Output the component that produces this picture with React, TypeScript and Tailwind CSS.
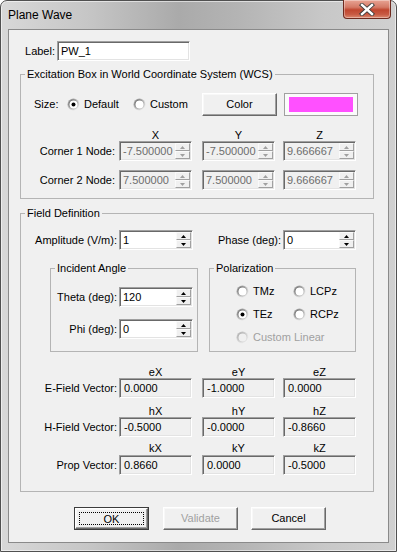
import type { ReactNode } from 'react';

const sunken =
  'border border-t-[#a0a0a0] border-l-[#a0a0a0] border-b-white border-r-white shadow-[inset_1px_1px_0_#696969,inset_-1px_-1px_0_#e3e3e3]';
const raised =
  'border border-t-white border-l-white border-b-[#696969] border-r-[#696969] shadow-[inset_-1px_-1px_0_#a0a0a0,inset_1px_1px_0_#f8f8f8] bg-[#f0f0f0]';

function Radio({ checked, disabled }: { checked?: boolean; disabled?: boolean }) {
  const outer = disabled ? 'url(#rad-o-d)' : 'url(#rad-o)';
  const inner = disabled ? 'url(#rad-i-d)' : 'url(#rad-i)';
  return (
    <svg width="13" height="13" viewBox="0 0 13 13" className="shrink-0">
      <defs>
        <linearGradient id="rad-o" x1="0" y1="0" x2="1" y2="1">
          <stop offset="0" stopColor="#8c8c8c" />
          <stop offset="1" stopColor="#ffffff" />
        </linearGradient>
        <linearGradient id="rad-i" x1="0" y1="0" x2="1" y2="1">
          <stop offset="0" stopColor="#505050" />
          <stop offset="1" stopColor="#e3e3e3" />
        </linearGradient>
        <linearGradient id="rad-o-d" x1="0" y1="0" x2="1" y2="1">
          <stop offset="0" stopColor="#b4b4b4" />
          <stop offset="1" stopColor="#ffffff" />
        </linearGradient>
        <linearGradient id="rad-i-d" x1="0" y1="0" x2="1" y2="1">
          <stop offset="0" stopColor="#a0a0a0" />
          <stop offset="1" stopColor="#ececec" />
        </linearGradient>
      </defs>
      <circle cx="6.5" cy="6.5" r="6" fill={outer} />
      <circle cx="6.5" cy="6.5" r="5" fill={inner} />
      <circle cx="6.5" cy="6.5" r="4" fill={disabled ? '#f0f0f0' : '#ffffff'} />
      {checked && <circle cx="6.5" cy="6.5" r="2" fill="#000" />}
    </svg>
  );
}

function SpinBtn({ up, disabled }: { up?: boolean; disabled?: boolean }) {
  return (
    <div className="flex flex-1 items-center justify-center border border-t-[#fafafa] border-l-[#fafafa] border-b-[#a0a0a0] border-r-[#a0a0a0] bg-[#f0f0f0]">
      <svg width="5" height="3" viewBox="0 0 5 3">
        <polygon
          points={up ? '2.5,0 5,3 0,3' : '0,0 5,0 2.5,3'}
          fill={disabled ? '#a0a0a0' : '#000'}
        />
      </svg>
    </div>
  );
}

function Spin({
  value,
  className,
  disabled,
}: {
  value: string;
  className: string;
  disabled?: boolean;
}) {
  return (
    <div
      className={`flex h-[20px] ${sunken} ${
        disabled ? 'bg-[#f0f0f0] text-[#6d6d6d]' : 'bg-white'
      } ${className}`}
    >
      <div className="flex-1 pl-[3px] leading-[18px]">{value}</div>
      <div className="flex w-[16px] flex-col py-[1px] pr-[1px]">
        <SpinBtn up disabled={disabled} />
        <SpinBtn disabled={disabled} />
      </div>
    </div>
  );
}

function Box({ value, className }: { value: string; className: string }) {
  return (
    <div className={`h-[20px] bg-[#f0f0f0] pl-[4px] leading-[18px] ${sunken} ${className}`}>
      {value}
    </div>
  );
}

function Group({
  title,
  className,
  children,
}: {
  title: string;
  className: string;
  children: ReactNode;
}) {
  return (
    <fieldset className={`border border-[#b4b4b4] ${className}`}>
      <legend className="ml-[4px] px-[2px] leading-[14px]">{title}</legend>
      {children}
    </fieldset>
  );
}

function Headers({ cols }: { cols: string[] }) {
  return (
    <div className="flex h-[12px] leading-[12px]">
      <div className="w-[98px]" />
      <div className="w-[73px] text-center">{cols[0]}</div>
      <div className="ml-[10px] w-[73px] text-center">{cols[1]}</div>
      <div className="ml-[8px] w-[73px] text-center">{cols[2]}</div>
    </div>
  );
}

function VectorRow({ label, values }: { label: string; values: string[] }) {
  return (
    <div className="flex h-[20px] items-center">
      <div className="w-[96px] text-right">{label}</div>
      <Box value={values[0]} className="ml-[2px] w-[73px]" />
      <Box value={values[1]} className="ml-[10px] w-[73px]" />
      <Box value={values[2]} className="ml-[8px] w-[73px]" />
    </div>
  );
}

function CornerRow({ label, values }: { label: string; values: string[] }) {
  return (
    <div className="flex h-[20px] items-center">
      <div className="w-[94px] pr-[0px] text-right">{label}</div>
      <Spin value={values[0]} disabled className="ml-[4px] w-[73px]" />
      <Spin value={values[1]} disabled className="ml-[10px] w-[73px]" />
      <Spin value={values[2]} disabled className="ml-[8px] w-[73px]" />
    </div>
  );
}

function CloseButton() {
  return (
    <div className="-mt-[1px] mr-[5px] flex h-[19px] w-[48px] items-center justify-center rounded-b-[4px] border border-t-0 border-[#6e2a1f] bg-[linear-gradient(180deg,#e8a494_0%,#d47a66_40%,#c0462f_55%,#c85a43_80%,#dc8a70_100%)] shadow-[inset_0_0_0_1px_rgba(255,255,255,0.35)]">
      <svg width="16" height="13" viewBox="0 0 16 13">
        <path d="M3 2 L13 11 M13 2 L3 11" stroke="#3a3a3a" strokeWidth="4.2" strokeLinecap="square" />
        <path d="M3 2 L13 11 M13 2 L3 11" stroke="#ffffff" strokeWidth="2.4" strokeLinecap="square" />
      </svg>
    </div>
  );
}

function PolOption({ label, checked, disabled }: { label: string; checked?: boolean; disabled?: boolean }) {
  return (
    <div className="flex h-[16px] items-center">
      <Radio checked={checked} disabled={disabled} />
      <span className={`ml-[4px] ${disabled ? 'text-[#a0a0a0]' : ''}`}>{label}</span>
    </div>
  );
}

export default function App() {
  return (
    <div className="h-[552px] w-[397px] font-['Liberation_Sans',Arial,sans-serif] text-[11px] text-black">
      <div className="flex h-full flex-col rounded-t-[7px] border border-[#505050] bg-[linear-gradient(90deg,#d8d8d8_0%,#c6c6c6_22%,#aaaaaa_45%,#b4b4b4_60%,#c8c8c8_82%,#d0d0d0_100%)] shadow-[inset_0_0_0_1px_rgba(255,255,255,0.55)]">
        {/* title bar */}
        <div className="flex h-[28px] shrink-0 items-start justify-between">
          <div className="pl-[7px] pt-[7px] text-[12px] leading-[14px]">Plane Wave</div>
          <CloseButton />
        </div>

        {/* client */}
        <div className="mx-[7px] flex h-[514px] flex-col border border-[#8a8a8a] bg-[#f0f0f0]">
          <div className="mt-[11px] flex h-[20px] items-center">
            <div className="w-[46px] text-right">Label:</div>
            <div className={`ml-[2px] h-[20px] w-[133px] bg-white pl-[3px] leading-[18px] ${sunken}`}>
              PW_1
            </div>
          </div>

          <Group
            title="Excitation Box in World Coordinate System (WCS)"
            className="ml-[11px] mt-[6px] w-[354px] pb-[8px]"
          >
            <div className="mt-[12px] flex h-[23px] items-center pl-[13px]">
              <div className="w-[33px]">Size:</div>
              <div className="flex w-[66px] items-center">
                <Radio checked />
                <span className="ml-[4px]">Default</span>
              </div>
              <div className="flex w-[69px] items-center">
                <Radio />
                <span className="ml-[4px]">Custom</span>
              </div>
              <div className={`flex h-[23px] w-[75px] items-center justify-center ${raised}`}>Color</div>
              <div className="ml-[7px] h-[23px] w-[74px] border border-[#a0a0a0] bg-[#fbfbfb] px-[4px] py-[3px]">
                <div className="h-full w-full bg-[#ff50ff]" />
              </div>
            </div>
            <div className="mt-[13px]">
              <Headers cols={['X', 'Y', 'Z']} />
            </div>
            <CornerRow label="Corner 1 Node:" values={['-7.500000', '-7.500000', '9.666667']} />
            <div className="mt-[9px]">
              <CornerRow label="Corner 2 Node:" values={['7.500000', '7.500000', '9.666667']} />
            </div>
          </Group>

          <Group title="Field Definition" className="ml-[11px] mt-[7px] w-[354px] pb-[16px]">
            <div className="mt-[10px] flex h-[20px] items-center">
              <div className="w-[96px] text-right">Amplitude (V/m):</div>
              <Spin value="1" className="ml-[2px] w-[74px]" />
              <div className="w-[88px] text-right">Phase (deg):</div>
              <Spin value="0" className="ml-[2px] w-[73px]" />
            </div>

            <div className="mt-[11px] flex">
              <Group title="Incident Angle" className="ml-[29px] w-[148px] pb-[12px]">
                <div className="mt-[12px] flex h-[20px] items-center">
                  <div className="w-[66px] text-right">Theta (deg):</div>
                  <Spin value="120" className="ml-[2px] w-[74px]" />
                </div>
                <div className="mt-[12px] flex h-[20px] items-center">
                  <div className="w-[66px] text-right">Phi (deg):</div>
                  <Spin value="0" className="ml-[2px] w-[74px]" />
                </div>
              </Group>
              <Group title="Polarization" className="ml-[11px] w-[147px]">
                <div className="mt-[8px] grid grid-cols-[57px_1fr] gap-y-[7px] pl-[26px]">
                  <PolOption label="TMz" />
                  <PolOption label="LCPz" />
                  <PolOption label="TEz" checked />
                  <PolOption label="RCPz" />
                  <div className="col-span-2">
                    <PolOption label="Custom Linear" disabled />
                  </div>
                </div>
              </Group>
            </div>

            <div className="mt-[14px]">
              <Headers cols={['eX', 'eY', 'eZ']} />
            </div>
            <VectorRow label="E-Field Vector:" values={['0.0000', '-1.0000', '0.0000']} />
            <div className="mt-[7px]">
              <Headers cols={['hX', 'hY', 'hZ']} />
            </div>
            <VectorRow label="H-Field Vector:" values={['-0.5000', '-0.0000', '-0.8660']} />
            <div className="mt-[5px]">
              <Headers cols={['kX', 'kY', 'kZ']} />
            </div>
            <div className="mt-[1px]">
              <VectorRow label="Prop Vector:" values={['0.8660', '0.0000', '-0.5000']} />
            </div>
          </Group>

          <div className="mt-[15px] flex">
            <div className="ml-[65px] h-[23px] w-[75px] border border-[#3c3c3c]">
              <div className={`h-full p-[3px] ${raised}`}>
                <div className="flex h-full items-center justify-center border border-dotted border-black leading-[12px]">
                  OK
                </div>
              </div>
            </div>
            <div className={`ml-[14px] flex h-[23px] w-[75px] items-center justify-center text-[#a0a0a0] ${raised}`}>
              Validate
            </div>
            <div className={`ml-[13px] flex h-[23px] w-[75px] items-center justify-center ${raised}`}>
              Cancel
            </div>
          </div>
        </div>
      </div>
    </div>
  );
}
